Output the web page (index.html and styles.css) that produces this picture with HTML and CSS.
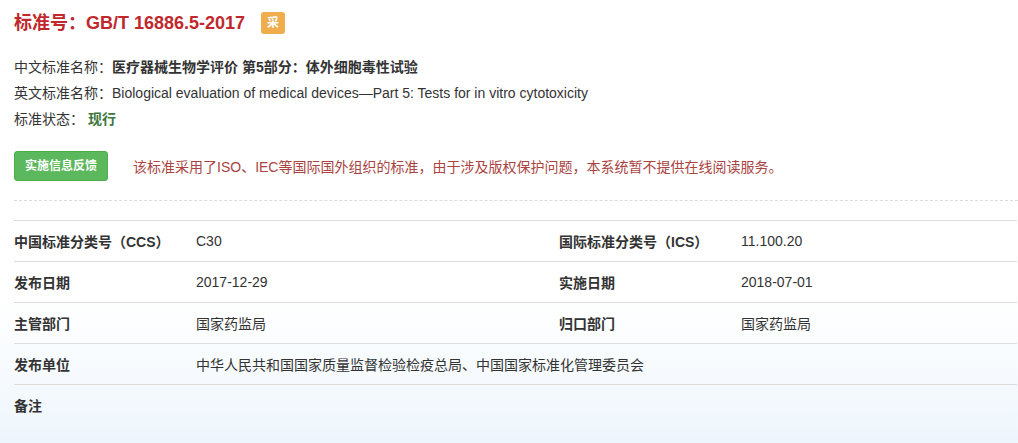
FILE: index.html
```html
<!DOCTYPE html>
<html lang="zh-CN">
<head>
<meta charset="utf-8">
<title>GB/T 16886.5-2017</title>
<link rel="stylesheet" href="styles.css">
</head>
<body>
<div class="page">
  <h1 class="title"><span>标准号：GB/T 16886.5-2017</span><span class="badge">采</span></h1>
  <div class="info">
    <p>中文标准名称：<b>医疗器械生物学评价 第5部分：体外细胞毒性试验</b></p>
    <p>英文标准名称：Biological evaluation of medical devices—Part 5: Tests for in vitro cytotoxicity</p>
    <p>标准状态：<b class="status">现行</b></p>
  </div>
  <div class="action">
    <button class="btn">实施信息反馈</button>
    <span class="notice">该标准采用了ISO、IEC等国际国外组织的标准，由于涉及版权保护问题，本系统暂不提供在线阅读服务。</span>
  </div>
  <div class="dash"></div>
  <table class="meta">
    <colgroup><col class="c1"><col class="c2"><col class="c3"><col class="c4"></colgroup>
    <tr><th>中国标准分类号（CCS）</th><td>C30</td><th>国际标准分类号（ICS）</th><td>11.100.20</td></tr>
    <tr><th>发布日期</th><td>2017-12-29</td><th>实施日期</th><td>2018-07-01</td></tr>
    <tr><th>主管部门</th><td>国家药监局</td><th>归口部门</th><td>国家药监局</td></tr>
    <tr><th>发布单位</th><td colspan="3">中华人民共和国国家质量监督检验检疫总局、中国国家标准化管理委员会</td></tr>
    <tr class="last"><th>备注</th><td colspan="3"></td></tr>
  </table>
</div>
</body>
</html>
```

FILE: styles.css
```css
html {
  background: linear-gradient(to bottom, #ffffff 0, #ffffff 300px, #eef6fd 443px);
  min-height: 100%;
}
body {
  margin: 0;
  font-family: "Liberation Sans", Arial, "Noto Sans CJK SC", sans-serif;
  font-size: 14px;
  color: #333;
}
.page {
  padding: 11px 1px 0 14px;
}
.title {
  margin: 0;
  display: flex;
  align-items: center;
  font-size: 18px;
  font-weight: bold;
  color: #c0282d;
  line-height: 24px;
}
.badge {
  margin-left: 16px;
  width: 24px;
  height: 22px;
  border-radius: 3px;
  background: #f0ad4e;
  color: #fff;
  font-size: 12px;
  line-height: 22px;
  text-align: center;
}
.info {
  margin-top: 19px;
}
.info p {
  margin: 0;
  line-height: 26px;
}
.status {
  color: #3c763d;
  margin-left: 4px;
}
.action {
  margin-top: 19px;
  display: flex;
  align-items: center;
}
.btn {
  font-family: inherit;
  font-size: 12px;
  font-weight: bold;
  color: #fff;
  background: #5cb85c;
  border: 1px solid #4cae4c;
  border-radius: 3px;
  padding: 0 10px;
  height: 30px;
  line-height: 28px;
}
.notice {
  margin-left: 25px;
  color: #a94442;
}
.dash {
  margin: 19px -1px 0 0;
  border-top: 1px dashed #dcdcdc;
}
.meta {
  margin-top: 19px;
  width: 100%;
  border-collapse: collapse;
  table-layout: fixed;
}
.c1 { width: 182px; }
.c2 { width: 363px; }
.c3 { width: 182px; }
.meta th, .meta td {
  height: 40px;
  padding: 0;
  text-align: left;
  border-top: 1px solid #dddddd;
  vertical-align: middle;
}
.meta th {
  font-weight: bold;
}
.meta td {
  font-weight: normal;
}
```
